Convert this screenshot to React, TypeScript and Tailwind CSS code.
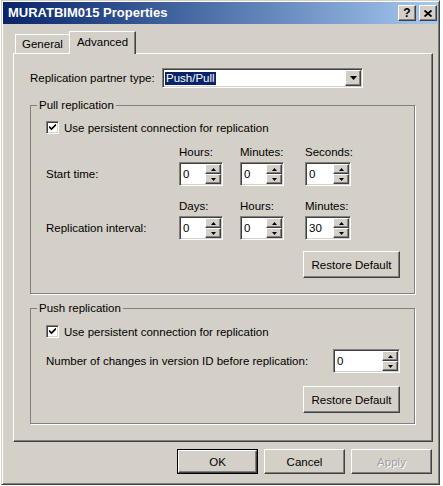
import React from 'react';

const raised =
  'border border-t-white border-l-white border-r-[#404040] border-b-[#404040] shadow-[inset_-1px_-1px_0_#808080]';
const sunken =
  'border border-t-[#808080] border-l-[#808080] border-r-white border-b-white shadow-[inset_1px_1px_0_#404040,inset_-1px_-1px_0_#d4d0c8]';
const groupBox =
  'border border-[#808080] shadow-[1px_1px_0_#fff] rounded-none';

const Arrow = ({ up }: { up?: boolean }) => (
  <svg width="5" height="3" viewBox="0 0 5 3">
    <path d={up ? 'M2.5 0L5 3H0z' : 'M0 0h5L2.5 3z'} fill="#000" />
  </svg>
);

const SpinBtn = ({ up }: { up?: boolean }) => (
  <div className={`flex-1 flex items-center justify-center bg-[#d4d0c8] ${raised}`}>
    <Arrow up={up} />
  </div>
);

const Spinner = ({ value, width }: { value: string; width: string }) => (
  <div className={`flex h-[24px] ${width} bg-white ${sunken}`}>
    <span className="flex-1 flex items-center pl-[3px]">{value}</span>
    <div className="flex flex-col w-[16px] my-[1px] mr-[1px]">
      <SpinBtn up />
      <SpinBtn />
    </div>
  </div>
);

const Checkbox = () => (
  <div className={`w-[13px] h-[13px] bg-white flex items-center justify-center ${sunken}`}>
    <svg width="7" height="7" viewBox="0 0 7 7">
      <path d="M0 2.5l2.5 2.5L7 0.5" stroke="#000" strokeWidth="1.6" fill="none" />
    </svg>
  </div>
);

const Button = ({ label, disabled, def }: { label: string; disabled?: boolean; def?: boolean }) => (
  <div className={`w-[81px] h-[25px] ${def ? 'border border-black' : ''}`}>
    <div
      className={`w-full h-full flex items-center justify-center bg-[#d4d0c8] ${raised} ${
        disabled ? 'text-[#a0a0a0] [text-shadow:1px_1px_0_#fff]' : ''
      }`}
    >
      {label}
    </div>
  </div>
);

const RestoreButton = () => (
  <div className={`w-[97px] h-[27px] flex items-center justify-center bg-[#d4d0c8] ${raised}`}>
    Restore Default
  </div>
);

const App: React.FC = () => {
  return (
    <div className="w-[443px] h-[486px] bg-white font-['Liberation_Sans',Arial,sans-serif] text-[11.5px] text-black leading-[14px]">
      <div className="ml-[1px] w-[439px] h-[485px] p-[1px] bg-[#d4d0c8] border border-t-[#d4d0c8] border-l-[#d4d0c8] border-r-[#404040] border-b-[#404040] shadow-[inset_1px_1px_0_#fff,inset_-1px_-1px_0_#808080] flex flex-col">
        {/* Title bar */}
        <div className="h-[22px] flex items-center justify-between pl-[5px] pr-[1px] bg-gradient-to-r from-[#0a246a] to-[#a6caf0]">
          <span className="text-white font-bold text-[13px]">MURATBIM015 Properties</span>
          <div className="flex gap-[3px]">
            <div className={`w-[18px] h-[16px] flex items-center justify-center bg-[#d4d0c8] font-bold text-[12px] ${raised}`}>
              ?
            </div>
            <div className={`w-[18px] h-[16px] flex items-center justify-center bg-[#d4d0c8] ${raised}`}>
              <svg width="8" height="7" viewBox="0 0 8 7">
                <path d="M0.5 0.5l7 6M7.5 0.5l-7 6" stroke="#000" strokeWidth="1.8" />
              </svg>
            </div>
          </div>
        </div>

        <div className="flex flex-col pl-[10px] pr-[5px] pt-[7px]">
          {/* Tabs */}
          <div className="flex items-end h-[22px] pl-[2px]">
            <div className="h-[19px] px-[6px] flex items-center border-t border-l border-t-white border-l-white">
              General
            </div>
            <div className="relative z-10 h-[23px] -mb-[1px] px-[7px] pb-[2px] flex items-center bg-[#d4d0c8] border-t border-l border-r border-t-white border-l-white border-r-[#404040] shadow-[inset_-1px_0_0_#808080]">
              Advanced
            </div>
          </div>

          {/* Panel */}
          <div className="h-[389px] flex flex-col pl-[16px] pr-[17px] pt-[14px] border border-t-white border-l-white border-r-[#404040] border-b-[#404040] shadow-[inset_-1px_-1px_0_#808080]">
            <div className="flex items-center h-[20px]">
              <span className="w-[132px]">Replication partner type:</span>
              <div className={`w-[201px] h-[20px] flex bg-white ${sunken}`}>
                <div className="flex-1 flex items-center pl-[2px]">
                  <span className="bg-[#0a246a] text-white px-[1px] leading-[13px]">Push/Pull</span>
                </div>
                <div className={`w-[16px] m-[1px] flex items-center justify-center bg-[#d4d0c8] ${raised}`}>
                  <svg width="7" height="4" viewBox="0 0 7 4">
                    <path d="M0 0h7L3.5 4z" fill="#000" />
                  </svg>
                </div>
              </div>
            </div>

            {/* Pull replication */}
            <fieldset className={`mt-[10px] px-0 pb-[15px] ${groupBox}`}>
              <legend className="ml-[6px] px-[2px] leading-[14px]">Pull replication</legend>
              <div className="flex flex-col pl-[15px] pr-[14px]">
                <div className="flex items-center gap-[5px] mt-[9px] h-[13px]">
                  <Checkbox />
                  <span>Use persistent connection for replication</span>
                </div>

                <div className="grid grid-cols-[133px_61px_65px_46px] mt-[11px]">
                  <span />
                  <span>Hours:</span>
                  <span>Minutes:</span>
                  <span>Seconds:</span>
                  <span className="self-center mt-[3px]">Start time:</span>
                  <div className="mt-[3px]"><Spinner value="0" width="w-[44px]" /></div>
                  <div className="mt-[3px]"><Spinner value="0" width="w-[44px]" /></div>
                  <div className="mt-[3px]"><Spinner value="0" width="w-[46px]" /></div>
                  <span className="mt-[13px]" />
                  <span className="mt-[13px]">Days:</span>
                  <span className="mt-[13px]">Hours:</span>
                  <span className="mt-[13px]">Minutes:</span>
                  <span className="self-center mt-[3px]">Replication interval:</span>
                  <div className="mt-[3px]"><Spinner value="0" width="w-[44px]" /></div>
                  <div className="mt-[3px]"><Spinner value="0" width="w-[44px]" /></div>
                  <div className="mt-[3px]"><Spinner value="30" width="w-[46px]" /></div>
                </div>

                <div className="flex justify-end mt-[11px]">
                  <RestoreButton />
                </div>
              </div>
            </fieldset>

            {/* Push replication */}
            <fieldset className={`mt-[7px] px-0 pb-[10px] ${groupBox}`}>
              <legend className="ml-[6px] px-[2px] leading-[14px]">Push replication</legend>
              <div className="flex flex-col pl-[15px] pr-[14px]">
                <div className="flex items-center gap-[5px] mt-[10px] h-[13px]">
                  <Checkbox />
                  <span>Use persistent connection for replication</span>
                </div>
                <div className="flex items-center justify-between mt-[11px]">
                  <span>Number of changes in version ID before replication:</span>
                  <Spinner value="0" width="w-[67px]" />
                </div>
                <div className="flex justify-end mt-[13px]">
                  <RestoreButton />
                </div>
              </div>
            </fieldset>
          </div>

          {/* Dialog buttons */}
          <div className="flex justify-end gap-[6px] mt-[7px] pr-[1px]">
            <Button label="OK" def />
            <Button label="Cancel" />
            <Button label="Apply" disabled />
          </div>
        </div>
      </div>
    </div>
  );
};

export default App;
